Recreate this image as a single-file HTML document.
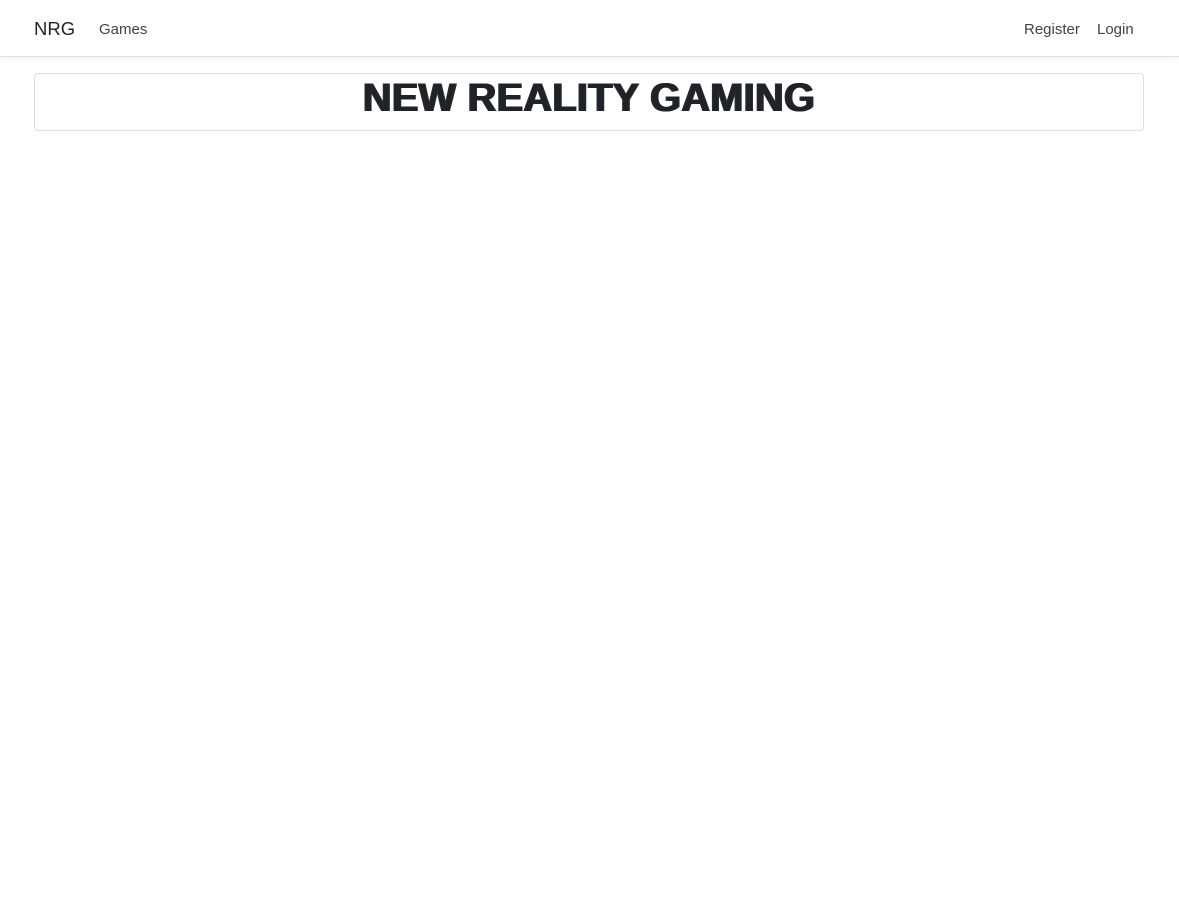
<!DOCTYPE html>
<html><head><meta charset="utf-8"><style>
*{box-sizing:border-box;margin:0;padding:0}
body{width:1179px;height:909px;background:#fff;font-family:"Liberation Sans",sans-serif;color:#212529;overflow:hidden}
nav{height:57px;border-bottom:1px solid #dee2e6;box-shadow:0 2px 6px rgba(0,0,0,.06);position:relative}
nav span{position:absolute;top:1px;line-height:57px}
nav span.brand{top:0}
.brand{left:34px;font-size:18.5px;color:#212529}
.l{font-size:15px;color:#3d4348}
.card{position:absolute;left:34px;top:73px;width:1110px;height:58px;border:1px solid #dcdfe2;border-radius:4px;text-align:center}
h1{font-size:39.7px;font-weight:900;line-height:48px;margin-top:0;color:#1f2328;text-shadow:1px 0 #2a2d30,-1px 0 #2a2d30;letter-spacing:0.3px}
</style></head><body>
<nav><span class="brand">NRG</span><span class="l" style="left:99px">Games</span><span class="l" style="left:1024px">Register</span><span class="l" style="left:1097px">Login</span></nav>
<div class="card"><h1>NEW REALITY GAMING</h1></div>
</body></html>
